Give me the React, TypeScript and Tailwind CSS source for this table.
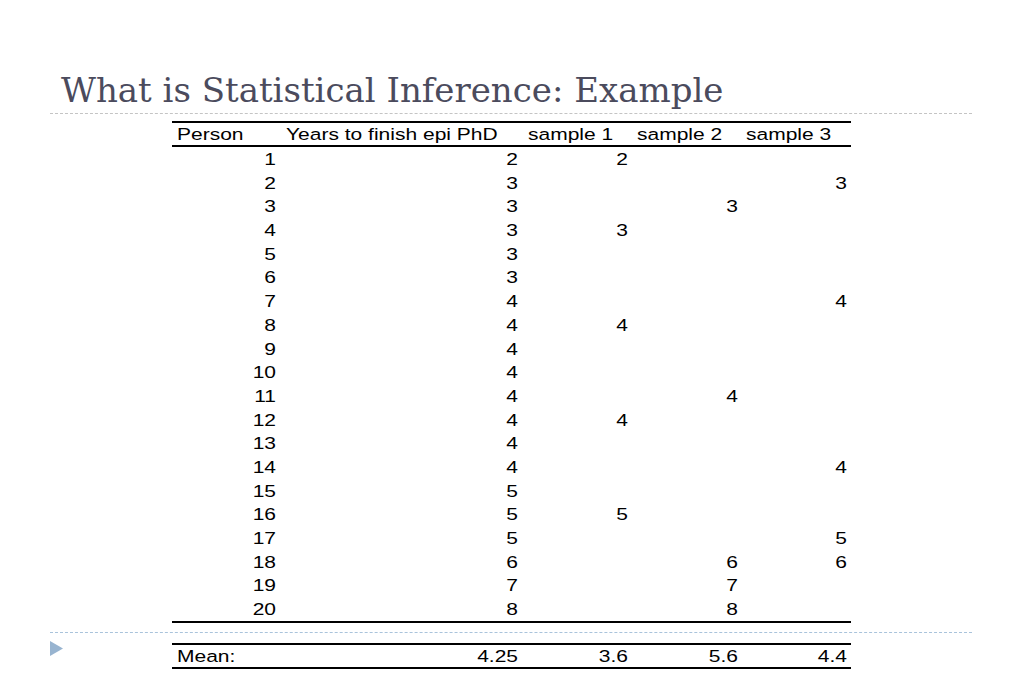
import React from "react";

type Row = [string, string, string, string, string];

const rows: Row[] = [
  ["1", "2", "2", "", ""],
  ["2", "3", "", "", "3"],
  ["3", "3", "", "3", ""],
  ["4", "3", "3", "", ""],
  ["5", "3", "", "", ""],
  ["6", "3", "", "", ""],
  ["7", "4", "", "", "4"],
  ["8", "4", "4", "", ""],
  ["9", "4", "", "", ""],
  ["10", "4", "", "", ""],
  ["11", "4", "", "4", ""],
  ["12", "4", "4", "", ""],
  ["13", "4", "", "", ""],
  ["14", "4", "", "", "4"],
  ["15", "5", "", "", ""],
  ["16", "5", "5", "", ""],
  ["17", "5", "", "", "5"],
  ["18", "6", "", "6", "6"],
  ["19", "7", "", "7", ""],
  ["20", "8", "", "8", ""],
];

const cols = "grid grid-cols-[108px_242px_110px_110px_109px]";

function T({ children }: { children: React.ReactNode }) {
  return <span className="inline-block scale-y-[0.8]">{children}</span>;
}

export default function App() {
  return (
    <div
      className="w-[1023px] h-[682px] bg-white overflow-hidden flex flex-col"
      style={{ fontFamily: '"Liberation Sans", Arial, sans-serif' }}
    >
      <div className="h-[113px] flex items-end pl-[61px] pb-[6px]">
        <h1
          className="text-[34px] leading-none text-[#4b4b5d] whitespace-nowrap"
          style={{ fontFamily: '"DejaVu Serif", Georgia, serif' }}
        >
          What is Statistical Inference: Example
        </h1>
      </div>
      <div className="ml-[50px] w-[922px] border-t border-dashed border-[#c4c4c4]" />

      <div className="ml-[172px] w-[679px] mt-[7px] text-[21px] text-black">
        <div className="border-t-2 border-black" />
        <div className={`${cols} h-[22px] leading-[22px] whitespace-nowrap`}>
          <div className="pl-[5px]"><T>Person</T></div>
          <div className="pl-[6px]"><T>Years to finish epi PhD</T></div>
          <div className="pl-[6px]"><T>sample 1</T></div>
          <div className="pl-[5px]"><T>sample 2</T></div>
          <div className="pl-[4px]"><T>sample 3</T></div>
        </div>
        <div className="border-t-2 border-black" />
        {rows.map((r) => (
          <div key={r[0]} className={`${cols} h-[23.7px] leading-[23.7px]`}>
            {r.map((c, i) => (
              <div key={i} className="text-right pr-[4px]">
                {c ? <T>{c}</T> : null}
              </div>
            ))}
          </div>
        ))}
        <div className="border-t-2 border-black" />
      </div>

      <div className="mt-[9px] ml-[50px] w-[922px] border-t border-dashed border-[#a9c3db]" />

      <div className="flex">
        <svg className="ml-[50px] mt-[8px]" width="13" height="15" viewBox="0 0 13 15">
          <polygon points="0,0 13,7.5 0,15" fill="#98b4d0" />
        </svg>
        <div className="ml-[109px] w-[679px] mt-[10px] text-[21px] text-black">
          <div className="border-t-2 border-black" />
          <div className={`${cols} h-[22px] leading-[22px]`}>
            <div className="pl-[5px]"><T>Mean:</T></div>
            <div className="text-right pr-[4px]"><T>4.25</T></div>
            <div className="text-right pr-[4px]"><T>3.6</T></div>
            <div className="text-right pr-[4px]"><T>5.6</T></div>
            <div className="text-right pr-[4px]"><T>4.4</T></div>
          </div>
          <div className="border-t-2 border-black" />
        </div>
      </div>
    </div>
  );
}
